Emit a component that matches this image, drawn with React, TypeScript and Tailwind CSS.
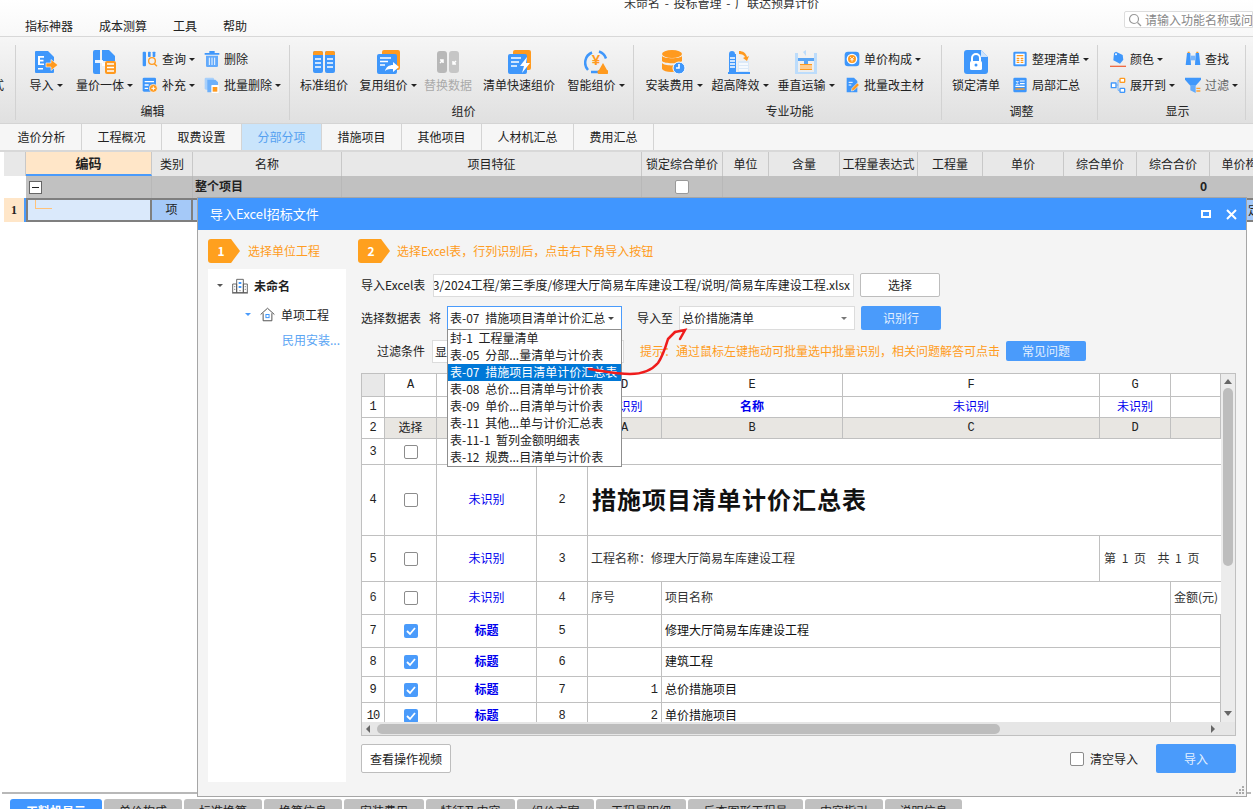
import type { ReactNode } from "react";

const B = "#3f97fb";
const O = "#ff9a1f";

const Svg = ({ s = 24, children }: { s?: number; children: ReactNode }) => (
  <svg width={s} height={s} viewBox="0 0 24 24" className="shrink-0">{children}</svg>
);

const icons: Record<string, ReactNode> = {
  daoru: (<><path d="M1 2a1 1 0 0 1 1-1h12l6 6v15a1 1 0 0 1-1 1H2a1 1 0 0 1-1-1z" fill={B} /><path d="M4 6h6v1.800H6v2h3.500v1.700H6v2h4V15H4z" fill="#fff" /><path d="M4 18h5v1.500H4z" fill="#fff" /><path d="M12 13h5V9.500l7 5.500-7 5.500V17h-5z" fill={O} stroke="#fff" strokeWidth=".6" /></>),
  liangjia: (<><path d="M0 2a2 2 0 0 1 2-2h5v24H2a2 2 0 0 1-2-2z" fill={B} /><path d="M9 0h7l6 6v5H9z" fill={B} /><path d="M9 13h5v3H9zM2 10h8v3H2z" fill="#fff" opacity=".9" /><rect x="12" y="11" width="11" height="13" rx="2" fill={O} /><path d="M14 14h7M14 17.500h7M14 21h7" stroke="#fff" strokeWidth="1.500" /></>),
  biaozhun: (<><rect x="1" y="1" width="10" height="22" rx="2" fill={B} /><rect x="13" y="1" width="10" height="22" rx="2" fill={B} /><path d="M1 3a2 2 0 0 1 2-2h6a2 2 0 0 1 2 2v2H1zM13 3a2 2 0 0 1 2-2h6a2 2 0 0 1 2 2v2H13z" fill={O} /><path d="M3 9h6M3 13h6M3 17h6M15 9h6M15 13h6M15 17h6" stroke="#fff" strokeWidth="1.600" /></>),
  fuyong: (<><rect x="6" y="0" width="18" height="20" rx="2" fill={O} /><rect x="1" y="4" width="20" height="20" rx="2" fill={B} /><path d="M4 8h11M4 11.500h8M4 15h5" stroke="#fff" strokeWidth="1.500" /><path d="M9 21c1-4 4-6 8-6v-3l6 5-6 5v-3c-3 0-6 0-8 2z" fill="#fff" /></>),
  tihuan: (<><rect x="1" y="1" width="10" height="22" rx="3" fill="#b8b8b8" /><rect x="13" y="1" width="10" height="22" rx="3" fill="#c6c6c6" /><path d="M4 13l3-3M4 10h3v3M20 11l-3 3M20 14h-3v-3" stroke="#fff" strokeWidth="1.500" fill="none" /></>),
  kuaisu: (<><rect x="6" y="0" width="18" height="20" rx="2" fill={O} /><rect x="1" y="4" width="19" height="20" rx="2" fill={B} /><path d="M4 8h10M4 12h8M4 16h6" stroke="#fff" strokeWidth="1.500" /><path d="M20 7l-7 9h4l-2 7 8-10h-4z" fill="#fff" /></>),
  zhineng: (<><path d="M8 2.500A11 11 0 0 0 4 20" fill="none" stroke={B} strokeWidth="2.500" /><path d="M15 1.500a11 11 0 0 1 7 7" fill="none" stroke={B} strokeWidth="2.500" /><path d="M7 22h9" stroke={B} strokeWidth="2.500" /><text x="12" y="15" fontSize="15" fontWeight="700" fill={O} textAnchor="middle" fontFamily="Liberation Sans">¥</text><path d="M16 24a2 2 0 0 1-1-4l4-7 4 7a2 2 0 0 1-1 4z" fill={O} /></>),
  anzhuang: (<><ellipse cx="10" cy="4" rx="10" ry="4" fill={O} /><path d="M0 6c2 3 18 3 20 0v5c-2 3-18 3-20 0z" fill={O} /><path d="M0 13c2 3 14 3 16 1v7c-6 2-14 1-16-2z" fill={O} /><circle cx="17" cy="18" r="6" fill={B} stroke="#fff" /><path d="M17 14v4h-3" stroke="#fff" strokeWidth="1.600" fill="none" /></>),
  chaogao: (<><path d="M1 4a3 3 0 0 1 6 0h1v18H1z" fill={B} /><path d="M2 8h5M2 11h5M2 14h5M2 17h5" stroke="#fff" strokeWidth="1.500" /><rect x="10" y="11" width="11" height="11" fill="#dbe9f8" /><path d="M11 14h9M11 17h9M11 20h9" stroke="#fff" strokeWidth="1.500" /><path d="M0 22h22v2H0z" fill={B} /><path d="M11 1c4 0 7 2 8 6l2-1-2 5-4-3 2-1c-1-2-3-3-6-3z" fill={O} /></>),
  chuizhi: (<><path d="M1 3h3v21H1zM20 3h3v21h-3z" fill="#bcdcfb" /><path d="M4 8h16v3H4z" fill="#5aa5f4" /><path d="M6 14h12v6H6z" fill={O} /><path d="M6 16h12M6 18h12" stroke="#fff" /><path d="M10 11h4v3h-4z" fill="#5aa5f4" /><path d="M4 22h16v2H4zM9 2l3-2v6" fill="#bcdcfb" /></>),
  suoding: (<><path d="M0 3a3 3 0 0 1 3-3h14l7 7v14a3 3 0 0 1-3 3H3a3 3 0 0 1-3-3z" fill={B} /><path d="M17 0l7 7h-7z" fill="#cfe4fc" /><path d="M8 11V8a4 4 0 0 1 8 0v3" fill="none" stroke="#fff" strokeWidth="2" /><rect x="6" y="11" width="12" height="9" rx="1.500" fill="#fff" /><circle cx="12" cy="15" r="1.500" fill={B} /></>),
  chaxun: (<><rect x="1" y="1" width="5" height="22" rx="1.500" fill={B} /><rect x="9" y="1" width="4" height="8" rx="1" fill={B} /><rect x="16" y="1" width="4" height="8" rx="1" fill={B} /><circle cx="15" cy="15" r="5" fill="none" stroke={O} strokeWidth="2" /><path d="M18.500 19l4 4" stroke={O} strokeWidth="2" /></>),
  buchong: (<><rect x="1" y="1" width="20" height="21" rx="2" fill={B} /><path d="M4 7h14M4 12h6M4 17h5" stroke="#fff" strokeWidth="2" /><circle cx="17" cy="17" r="6" fill={O} stroke="#fff" /><path d="M14 17h6M17 14v6" stroke="#fff" strokeWidth="1.500" /></>),
  shanchu: (<><path d="M1 3h22v2.500H1zM8 0h8v3H8z" fill={B} /><path d="M3 7h18v15a2 2 0 0 1-2 2H5a2 2 0 0 1-2-2z" fill="#63aafb" /><path d="M8 10v11M12 10v11M16 10v11" stroke="#fff" strokeWidth="1.400" /></>),
  piliang: (<><rect x="1" y="1" width="14" height="18" rx="2" fill="#a8d0fb" /><path d="M5 4h12l4 4v15H5z" fill="#6cb0fb" /><rect x="11" y="12" width="11" height="12" rx="1" fill="#fff" /><rect x="13" y="15" width="7" height="7" fill={O} /></>),
  danjia: (<><rect x="1" y="1" width="22" height="22" rx="5" fill={B} /><circle cx="12" cy="12" r="7" fill={O} stroke="#fff" strokeWidth="2" /><path d="M9 9l3 3 3-3M12 12v4M9.500 13h5" stroke="#fff" strokeWidth="1.200" fill="none" /></>),
  gaizhu: (<><path d="M4 1h11l5 5v17H4z" fill={B} /><path d="M7 8h6M7 12h4" stroke="#fff" strokeWidth="1.500" /><path d="M11 21l1-4 8-8 3 3-8 8z" fill={O} stroke="#fff" strokeWidth=".8" /></>),
  zhengli: (<><rect x="2" y="1" width="20" height="22" rx="2" fill={B} /><rect x="5" y="4" width="14" height="16" fill="#fff" /><path d="M7 7h10M7 11h4M13 11h4M7 14h4M13 14h4M7 17h4M13 17h4" stroke={O} strokeWidth="1.800" /></>),
  jubu: (<><rect x="2" y="1" width="20" height="22" rx="2" fill={B} /><path d="M12 6h7M12 10h7M5 14h14" stroke="#fff" strokeWidth="1.800" /><path d="M5 18h14" stroke={O} strokeWidth="2" /><text x="8" y="12" fontSize="9" fill="#fff" textAnchor="middle" fontFamily="Liberation Sans">Σ</text></>),
  yanse: (<><path d="M6 3l3-2 10 5 1 7-5 6-10-5z" fill={B} /><circle cx="9" cy="5" r="1.500" fill="#fff" /><path d="M0 22h24v2H0z" fill="#f06a42" /></>),
  zhankai: (<><rect x="1" y="8" width="9" height="9" rx="1" fill={B} /><rect x="14" y="1" width="9" height="8" rx="2" fill={O} /><rect x="14" y="16" width="9" height="8" rx="2" fill={B} /><rect x="16" y="3" width="5" height="4" fill="#fff" /><rect x="16" y="18" width="5" height="4" fill="#fff" /><rect x="3" y="10" width="5" height="5" fill="#fff" /><path d="M10 12h2V5h2M12 12v8h2" stroke={B} fill="none" /></>),
  chazhao: (<><path d="M3 3h5l1 18H1zM16 3h5l2 18h-8z" fill={B} /><rect x="9" y="7" width="6" height="7" fill="#7ab6fb" /><path d="M4 1h3v2H4zM17 1h3v2h-3z" fill={O} /></>),
  guolv: (<><path d="M0 1h24v3l-8 9H8L0 4z" fill={B} /><path d="M8 13h8v11l-8-4z" fill="#62aafb" /><path d="M17 16h6v2h-6zM17 20h6v2h-6z" fill={O} opacity=".9" /></>),
  building: (<><path d="M7 2h10v20H7zM1 9h6v13H1zM17 9h6v13h-6z" fill="none" stroke="#555" strokeWidth="1.300" /><path d="M0 22.500h24" stroke="#555" strokeWidth="1.300" /><path d="M10 6h4v3h-4zM10 12h4v3h-4z" fill={B} /><path d="M3 13h2M3 17h2M19 13h2M19 17h2M11 19h2" stroke="#555" /></>),
  home: (<><path d="M1 12L12 2l11 10" fill="none" stroke="#555" strokeWidth="1.600" /><path d="M5 10v12h14V10" fill="none" stroke="#555" strokeWidth="1.600" /><rect x="9.500" y="12" width="5" height="5" fill="none" stroke={B} strokeWidth="1.600" /></>),
};

const Caret = ({ color = "border-t-[#222]" }: { color?: string }) => (
  <span className={`inline-block shrink-0 w-0 h-0 border-x-[3px] border-x-transparent border-t-[3px] ${color}`} />
);

function Big({ icon, label, w, caret, off }: { icon: string; label: string; w: string; caret?: boolean; off?: boolean }) {
  return (
    <div className={`${w} flex flex-col items-center shrink-0`}>
      <div className="mt-[5px] h-[24px]"><Svg>{icons[icon]}</Svg></div>
      <div className={`mt-[3px] h-[16px] flex items-center gap-[3px] leading-[16px] whitespace-nowrap ${off ? "text-[#aaa]" : ""}`}>
        {label}{caret && <Caret />}
      </div>
    </div>
  );
}

function Small({ icon, label, caret, muted }: { icon: string; label: string; caret?: boolean; muted?: boolean }) {
  return (
    <div className="h-[26px] flex items-center whitespace-nowrap">
      <Svg s={16}>{icons[icon]}</Svg>
      <span className={`ml-[4px] ${muted ? "text-[#666]" : ""}`}>{label}</span>
      {caret && <span className="ml-[3px] flex"><Caret /></span>}
    </div>
  );
}

function Group({ w, label, pl, children }: { w: string; label: string; pl: string; children: ReactNode }) {
  return (
    <div className={`${w} ${pl} h-[75px] shrink-0 border-r border-[#d2d2d2] flex flex-col`}>
      <div className="h-[58px] flex">{children}</div>
      <div className="h-[16px] leading-[16px] text-center">{label}</div>
    </div>
  );
}

const SmallCol = ({ w, children }: { w: string; children: ReactNode }) => (
  <div className={`${w} pt-[1px] shrink-0`}>{children}</div>
);

const topTabs = [
  { t: "造价分析", w: "w-[80px]" }, { t: "工程概况", w: "w-[80px]" }, { t: "取费设置", w: "w-[80px]" },
  { t: "分部分项", w: "w-[80px]", on: true }, { t: "措施项目", w: "w-[80px]" }, { t: "其他项目", w: "w-[80px]" },
  { t: "人材机汇总", w: "w-[92px]" }, { t: "费用汇总", w: "w-[80px]" },
];

const headCols = [
  { t: "编码", w: "w-[126px]", on: true }, { t: "类别", w: "w-[41px]" }, { t: "名称", w: "w-[149px]" },
  { t: "项目特征", w: "w-[300px]" }, { t: "锁定综合单价", w: "w-[81px]" }, { t: "单位", w: "w-[46px]" },
  { t: "含量", w: "w-[71px]" }, { t: "工程量表达式", w: "w-[78px]" }, { t: "工程量", w: "w-[65px]" },
  { t: "单价", w: "w-[81px]" }, { t: "综合单价", w: "w-[73px]" }, { t: "综合合价", w: "w-[73px]" }, { t: "单价构", w: "w-[60px]" },
];

const bottomTabs = [
  { t: "工料机显示", w: "w-[92px]" }, { t: "单价构成", w: "w-[78px]" }, { t: "标准换算", w: "w-[78px]" },
  { t: "换算信息", w: "w-[78px]" }, { t: "安装费用", w: "w-[80px]" }, { t: "特征及内容", w: "w-[89px]" },
  { t: "组价方案", w: "w-[77px]" }, { t: "工程量明细", w: "w-[90px]" }, { t: "反查图形工程量", w: "w-[115px]" },
  { t: "内容指引", w: "w-[78px]" }, { t: "说明信息", w: "w-[77px]" },
];

const sheets = [
  "封-1 工程量清单", "表-05 分部...量清单与计价表", "表-07 措施项目清单计价汇总表", "表-08 总价...目清单与计价表",
  "表-09 单价...目清单与计价表", "表-11 其他...单与计价汇总表", "表-11-1 暂列金额明细表", "表-12 规费...目清单与计价表",
];

const mono = "font-['Liberation_Mono',monospace]";

function Cell({ w, className = "", children }: { w: string; className?: string; children?: ReactNode }) {
  return (
    <div className={`${w} shrink-0 h-full border-r border-[#c0c0c0] flex items-center justify-center overflow-hidden whitespace-nowrap ${className}`}>
      {children}
    </div>
  );
}

const Check = ({ on }: { on?: boolean }) => on ? (
  <span className="w-[14px] h-[14px] rounded-[2px] bg-[#4a9bfb] flex items-center justify-center">
    <svg width="10" height="10" viewBox="0 0 10 10"><path d="M1 5l3 3 5-6" fill="none" stroke="#fff" strokeWidth="1.800" /></svg>
  </span>
) : (
  <span className="w-[14px] h-[14px] rounded-[2px] bg-white border border-[#8c8c8c]" />
);

const Unknown = () => <span className="-mt-[2px] text-[#0000ee]">未识别</span>;
const Num = `${mono} text-[12px]`;

const C0 = "w-[23px]", CA = "w-[52px]", CB = "w-[100px]", CC = "w-[51px]", CD = "w-[74px]", CE = "w-[181px]", CF = "w-[257px]", CG = "w-[71px]", CH = "w-[50px]";

function DataRow({ h, n, c, left, right }: { h: string; n: number; c: number; left?: string; right: string }) {
  return (
    <div className={`${h} shrink-0 flex border-b border-[#c0c0c0]`}>
      <Cell w={C0} className={`${Num} ${n === 10 ? "tracking-[-1px]" : ""}`}>{n}</Cell>
      <Cell w={CA}><Check on /></Cell>
      <Cell w={CB} className="font-bold text-[#0000ee]"><span className="-mt-[2px]">标题</span></Cell>
      <Cell w={CC} className={Num}>{c}</Cell>
      <Cell w={CD} className={`${mono} justify-end pr-[3px]`}>{left}</Cell>
      <div className="w-[509px] shrink-0 h-full border-r border-[#c0c0c0] flex items-center pl-[3px] pb-[2px] text-[#111]">{right}</div>
      <Cell w={CH} />
    </div>
  );
}

export default function App() {
  return (
    <div className="relative w-[1253px] h-[809px] overflow-hidden bg-white text-[12px] text-[#222] font-['Noto_Sans_CJK_SC','Noto_Sans',sans-serif]">
      {/* 标题和菜单 */}
      <div className="h-[37px] border-b border-[#d8d8d8] bg-gradient-to-b from-white to-[#f8f8f8] overflow-hidden">
        <div className="h-[6px] -mt-[4px] pl-[624px] leading-[14px] whitespace-nowrap text-[#333] [word-spacing:2px]">未命名 - 投标管理 - 广联达预算计价</div>
        <div className="mt-[9px] flex items-start pl-[25px]">
          <div className="flex gap-[26px] pt-[7px] leading-[16px]">
            <span>指标神器</span><span>成本测算</span><span>工具</span><span>帮助</span>
          </div>
          <div className="ml-auto w-[129px] h-[17px] bg-white border border-[#ddd] rounded-l-[2px] flex items-center overflow-hidden">
            <svg width="14" height="14" viewBox="0 0 14 14" className="ml-[3px] shrink-0"><circle cx="6" cy="6" r="4.500" fill="none" stroke="#999" strokeWidth="1.200" /><path d="M9.500 9.500L13 13" stroke="#999" strokeWidth="1.200" /></svg>
            <span className="ml-[3px] text-[#888] whitespace-nowrap">请输入功能名称或问</span>
          </div>
        </div>
      </div>

      {/* 功能区 */}
      <div className="h-[87px] pt-[8px] border-b border-[#d4d4d4] bg-gradient-to-b from-[#f6f6f6] to-[#e0e0e0] flex overflow-hidden">
        <div className="w-[16px] h-[75px] shrink-0 border-r border-[#d2d2d2] relative overflow-hidden">
          <span className="absolute -left-[8px] top-[32px] leading-[16px]">式</span>
        </div>
        <Group w="w-[274px]" pl="pl-0" label="编辑">
          <Big icon="daoru" label="导入" caret w="w-[60px]" />
          <Big icon="liangjia" label="量价一体" caret w="w-[57px]" />
          <div className="w-[9px] shrink-0" />
          <SmallCol w="w-[62px]"><Small icon="chaxun" label="查询" caret /><Small icon="buchong" label="补充" caret /></SmallCol>
          <SmallCol w="w-[76px]"><Small icon="shanchu" label="删除" /><Small icon="piliang" label="批量删除" caret /></SmallCol>
        </Group>
        <Group w="w-[344px]" pl="pl-[4px]" label="组价">
          <Big icon="biaozhun" label="标准组价" w="w-[60px]" />
          <Big icon="fuyong" label="复用组价" caret w="w-[68px]" />
          <Big icon="tihuan" label="替换数据" off w="w-[52px]" />
          <Big icon="kuaisu" label="清单快速组价" w="w-[90px]" />
          <Big icon="zhineng" label="智能组价" caret w="w-[64px]" />
        </Group>
        <Group w="w-[308px]" pl="pl-[4px]" label="专业功能">
          <Big icon="anzhuang" label="安装费用" caret w="w-[72px]" />
          <Big icon="chaogao" label="超高降效" caret w="w-[60px]" />
          <Big icon="chuizhi" label="垂直运输" caret w="w-[72px]" />
          <div className="w-[2px] shrink-0" />
          <SmallCol w="w-[90px]"><Small icon="danjia" label="单价构成" caret /><Small icon="gaizhu" label="批量改主材" /></SmallCol>
        </Group>
        <Group w="w-[156px]" pl="pl-[4px]" label="调整">
          <Big icon="suoding" label="锁定清单" w="w-[60px]" />
          <div className="w-[6px] shrink-0" />
          <SmallCol w="w-[80px]"><Small icon="zhengli" label="整理清单" caret /><Small icon="jubu" label="局部汇总" /></SmallCol>
        </Group>
        <Group w="w-[148px]" pl="pl-[12px]" label="显示">
          <SmallCol w="w-[75px]"><Small icon="yanse" label="颜色" caret /><Small icon="zhankai" label="展开到" caret /></SmallCol>
          <SmallCol w="w-[60px]"><Small icon="chazhao" label="查找" /><Small icon="guolv" label="过滤" caret muted /></SmallCol>
        </Group>
      </div>

      {/* 页签 */}
      <div className="h-[28px] pl-[2px] bg-[#f6f6f6] border-b-2 border-[#d8d8d8] flex">
        {topTabs.map((t) => (
          <div key={t.t} className={`${t.w} h-full border-r border-[#d4d4d4] flex items-center justify-center ${t.on ? "bg-[#c9e4fb] text-[#55a0f0]" : ""}`}>{t.t}</div>
        ))}
      </div>

      {/* 清单表格 */}
      <div className="flex h-[24px] pl-[4px] bg-white">
        <div className="w-[22px] shrink-0 bg-[#e8e8e8] border-r border-[#c8c8c8]" />
        {headCols.map((c) => (
          <div key={c.t} className={`${c.w} shrink-0 border-r border-[#c8c8c8] flex items-center justify-center overflow-hidden whitespace-nowrap ${c.on ? "bg-[#ffe6c8] border-b-2 border-b-[#4a9bfb] font-bold text-[13px]" : "bg-[#e8e8e8]"}`}>{c.t}</div>
        ))}
      </div>
      <div className="flex h-[22px] pl-[4px]">
        <div className="w-[22px] shrink-0 bg-white" />
        <div className="flex-1 bg-[#c1c1c1] flex font-bold">
          <div className="w-[126px] shrink-0 border-r border-[#b8b8b8] flex items-center pl-[3px]">
            <span className="w-[13px] h-[13px] bg-white border border-[#666] flex items-center justify-center"><span className="w-[7px] h-[1px] bg-[#222]" /></span>
          </div>
          <div className="w-[41px] shrink-0 border-r border-[#b8b8b8]" />
          <div className="w-[149px] shrink-0 border-r border-[#b8b8b8] flex items-center pl-[2px] pb-[2px]">整个项目</div>
          <div className="w-[300px] shrink-0 border-r border-[#b8b8b8]" />
          <div className="w-[81px] shrink-0 border-r border-[#b8b8b8] flex items-center justify-center"><span className="w-[14px] h-[14px] bg-white border border-[#999] rounded-[2px]" /></div>
          <div className="ml-[414px] w-[73px] shrink-0 text-right pr-[3px] leading-[20px]">0</div>
        </div>
      </div>
      <div className="flex h-[24px] pl-[4px]">
        <div className="w-[22px] shrink-0 bg-[#ffe6c8] border-r-2 border-[#4a9bfb] flex items-center justify-center font-bold font-['Liberation_Serif',serif]">1</div>
        <div className="w-[126px] shrink-0 bg-[#dae9fb] border-2 border-[#7f7f7f] relative">
          <span className="absolute left-[7px] top-0 w-[17px] h-[9px] border-l border-b border-[#ffc27a]" />
        </div>
        <div className="w-[41px] shrink-0 bg-[#a5c9f8] border-y-2 border-r-2 border-[#7f7f7f] flex items-center justify-center pb-[2px]">项</div>
        <div className="flex-1 bg-[#a5c9f8] border-y-2 border-[#7f7f7f] flex items-center justify-end overflow-hidden">
          <span className="-mr-[7px]">定</span>
        </div>
      </div>
      <div className="h-[570px] bg-white" />

      {/* 底部页签 */}
      <div className="h-[2px] mx-[2px] bg-[#b8b8b8]" />
      <div className="pl-[10px] pt-[5px] flex gap-[2px]">
        {bottomTabs.map((t, i) => (
          <div key={t.t} className={`${t.w} h-[26px] shrink-0 rounded-t-[3px] pt-[3px] text-center whitespace-nowrap ${i === 0 ? "bg-[#4096ff] text-white font-bold" : "bg-[#c0c0c0]"}`}>{t.t}</div>
        ))}
      </div>

      {/* 导入弹窗 */}
      <div className="absolute left-[197px] top-[197px] w-[1050px] h-[600px] bg-[#f4f4f4] border border-[#a6a6a6] flex flex-col">
        <div className="h-[32px] bg-[#4096ff] shrink-0 flex items-center pl-[12px] pr-[9px] text-white text-[13px]">
          导入Excel招标文件
          <span className="ml-auto w-[10px] h-[8px] border-2 border-white" />
          <svg width="11" height="11" viewBox="0 0 11 11" className="ml-[15px]"><path d="M1 1l9 9M10 1l-9 9" stroke="#fff" strokeWidth="2" /></svg>
        </div>
        <div className="flex-1 flex pl-[10px] pt-[9px]">
          {/* 左侧工程树 */}
          <div className="w-[138px] shrink-0">
            <div className="h-[24px] flex items-center whitespace-nowrap text-[#ff9c22]">
              <span className="w-[32px] h-[24px] bg-[#ffa01e] rounded-l-[3px] [clip-path:polygon(0_0,72%_0,100%_50%,72%_100%,0_100%)] pr-[6px] flex items-center justify-center text-white font-bold">1</span>
              <span className="ml-[8px]">选择单位工程</span>
            </div>
            <div className="mt-[6px] h-[513px] bg-white">
              <div className="h-[32px] pt-[1px] flex items-center pl-[9px]">
                <Caret color="border-t-[#555]" />
                <span className="ml-[9px]"><Svg s={16}>{icons.building}</Svg></span>
                <span className="ml-[6px] font-bold">未命名</span>
              </div>
              <div className="h-[27px] flex items-center pl-[37px]">
                <Caret color="border-t-[#4a9bfb]" />
                <span className="ml-[9px]"><Svg s={15}>{icons.home}</Svg></span>
                <span className="ml-[6px]">单项工程</span>
              </div>
              <div className="h-[24px] flex items-center pl-[74px] text-[#5aa5f4] whitespace-nowrap">民用安装...</div>
            </div>
          </div>

          {/* 右侧 */}
          <div className="ml-[12px] w-[878px] shrink-0">
            <div className="h-[24px] flex items-center whitespace-nowrap text-[#ff9c22]">
              <span className="w-[32px] h-[24px] bg-[#ffa01e] rounded-l-[3px] [clip-path:polygon(0_0,72%_0,100%_50%,72%_100%,0_100%)] pr-[6px] flex items-center justify-center text-white font-bold">2</span>
              <span className="ml-[7px]">选择Excel表，行列识别后，点击右下角导入按钮</span>
            </div>

            <div className="pl-[3px]">
              <div className="mt-[10px] h-[24px] flex items-center">
                <span className="w-[72px] shrink-0 whitespace-nowrap">导入Excel表</span>
                <div className="w-[421px] h-[23px] shrink-0 bg-white border border-[#dcdcdc] flex items-center justify-end overflow-hidden whitespace-nowrap pr-[3px]">
                  2023/2024工程/第三季度/修理大厅简易车库建设工程/说明/简易车库建设工程.xlsx
                </div>
                <div className="ml-[6px] w-[80px] h-[24px] bg-white border border-[#bdbdbd] rounded-[2px] flex items-center justify-center">选择</div>
              </div>

              <div className="mt-[9px] h-[24px] flex items-center">
                <span className="w-[68px] shrink-0 whitespace-nowrap">选择数据表</span>
                <span className="w-[18px] shrink-0">将</span>
                <div className="w-[175px] h-[24px] shrink-0 bg-white border border-[#4a9bfb] flex items-center pl-[2px] pr-[7px] whitespace-nowrap overflow-hidden [word-spacing:3px]">
                  <span className="overflow-hidden">表-07 措施项目清单计价汇总</span>
                  <span className="ml-auto flex"><Caret color="border-t-[#444]" /></span>
                </div>
                <span className="ml-[15px] w-[42px] shrink-0">导入至</span>
                <div className="w-[176px] h-[24px] shrink-0 bg-white border border-[#dcdcdc] flex items-center pl-[2px] pr-[7px]">
                  总价措施清单
                  <span className="ml-auto flex"><Caret color="border-t-[#777]" /></span>
                </div>
                <div className="ml-[6px] w-[80px] h-[24px] bg-[#4a9bfb] rounded-[2px] text-[#e3f0ff] flex items-center justify-center">识别行</div>
              </div>

              <div className="mt-[9px] h-[24px] flex items-center">
                <span className="ml-[16px] w-[55px] shrink-0 whitespace-nowrap">过滤条件</span>
                <div className="w-[192px] h-[23px] shrink-0 bg-white border border-[#dcdcdc] pl-[2px] leading-[21px]">显</div>
                <span className="ml-[16px] w-[366px] shrink-0 whitespace-nowrap text-[#ff9c22]">提示：通过鼠标左键拖动可批量选中批量识别，相关问题解答可点击</span>
                <div className="w-[80px] h-[20px] bg-[#4a9bfb] rounded-[2px] text-[#e3f0ff] flex items-center justify-center">常见问题</div>
              </div>

              {/* 预览表 */}
              <div className="mt-[10px] w-[875px] h-[363px] bg-white border border-[#c0c0c0] flex flex-col">
                <div className="h-[348px] flex overflow-hidden">
                  <div className="w-[859px] shrink-0 flex flex-col overflow-hidden">
                    <div className={`h-[23px] shrink-0 flex border-b border-[#c0c0c0] ${Num}`}>
                      <Cell w={C0} className="bg-[#e8e8e8]" /><Cell w={CA}>A</Cell><Cell w={CB} /><Cell w={CC} />
                      <Cell w={CD}>D</Cell><Cell w={CE}>E</Cell><Cell w={CF}>F</Cell><Cell w={CG}>G</Cell><Cell w={CH} />
                    </div>
                    <div className="h-[21px] shrink-0 flex border-b border-[#c0c0c0]">
                      <Cell w={C0} className={Num}>1</Cell><Cell w={CA} /><Cell w={CB} /><Cell w={CC} />
                      <Cell w={CD}><Unknown /></Cell><Cell w={CE} className="font-bold text-[#0000ee]"><span className="-mt-[2px]">名称</span></Cell>
                      <Cell w={CF}><Unknown /></Cell><Cell w={CG}><Unknown /></Cell><Cell w={CH} />
                    </div>
                    <div className={`h-[21px] shrink-0 flex border-b border-[#c0c0c0] bg-[#e8e6e2] ${Num}`}>
                      <Cell w={C0} className="bg-white">2</Cell>
                      <Cell w={CA} className="font-['Noto_Sans_CJK_SC',sans-serif] pb-[2px]">选择</Cell>
                      <Cell w={CB} /><Cell w={CC} /><Cell w={CD}>A</Cell><Cell w={CE}>B</Cell><Cell w={CF}>C</Cell><Cell w={CG}>D</Cell><Cell w={CH} />
                    </div>
                    <div className="h-[26px] shrink-0 flex border-b border-[#c0c0c0]">
                      <Cell w={C0} className={Num}>3</Cell><Cell w={CA}><Check /></Cell><Cell w={CB} />
                      <Cell w={CC} /><div className="flex-1" />
                    </div>
                    <div className="h-[71px] shrink-0 flex border-b border-[#c0c0c0]">
                      <Cell w={C0} className={Num}>4</Cell><Cell w={CA}><Check /></Cell><Cell w={CB}><Unknown /></Cell>
                      <Cell w={CC} className={Num}>2</Cell>
                      <div className="flex-1 flex items-center pl-[4px] pb-[2px] text-[24px] font-bold tracking-[1px] text-[#111] whitespace-nowrap">措施项目清单计价汇总表</div>
                    </div>
                    <div className="h-[46px] shrink-0 flex border-b border-[#c0c0c0]">
                      <Cell w={C0} className={Num}>5</Cell><Cell w={CA}><Check /></Cell><Cell w={CB}><Unknown /></Cell>
                      <Cell w={CC} className={Num}>3</Cell>
                      <div className="w-[512px] shrink-0 h-full border-r border-[#c0c0c0] flex items-center pl-[3px] pb-[2px] text-[#333] whitespace-nowrap">工程名称：修理大厅简易车库建设工程</div>
                      <div className="flex-1 flex items-center pl-[4px] pb-[2px] text-[#333] whitespace-pre [word-spacing:3px]">第 1 页  共 1 页</div>
                    </div>
                    <div className="h-[33px] shrink-0 flex border-b border-[#c0c0c0] text-[#333]">
                      <Cell w={C0} className={Num}>6</Cell><Cell w={CA}><Check /></Cell><Cell w={CB}><Unknown /></Cell>
                      <Cell w={CC} className={Num}>4</Cell>
                      <Cell w={CD} className="justify-start pl-[3px] pb-[2px]">序号</Cell>
                      <div className="w-[509px] shrink-0 h-full border-r border-[#c0c0c0] flex items-center pl-[3px] pb-[2px]">项目名称</div>
                      <div className="flex-1 flex items-center pl-[3px] pb-[2px] whitespace-nowrap overflow-hidden">金额(元)</div>
                    </div>
                    <DataRow h="h-[33px]" n={7} c={5} right="修理大厅简易车库建设工程" />
                    <DataRow h="h-[29px]" n={8} c={6} right="建筑工程" />
                    <DataRow h="h-[26px]" n={9} c={7} left="1" right="总价措施项目" />
                    <DataRow h="h-[26px]" n={10} c={8} left="2" right="单价措施项目" />
                  </div>
                  {/* 竖向滚动条 */}
                  <div className="w-[14px] shrink-0 bg-[#ececec] flex flex-col items-center">
                    <span className="mt-[5px] w-0 h-0 border-x-[4px] border-x-transparent border-b-[5px] border-b-[#666]" />
                    <span className="mt-[4px] w-[10px] h-[178px] rounded-[5px] bg-[#bdbdbd]" />
                    <span className="mt-auto mb-[6px] w-0 h-0 border-x-[4px] border-x-transparent border-t-[5px] border-t-[#666]" />
                  </div>
                </div>
                {/* 横向滚动条 */}
                <div className="h-[13px] bg-[#e6e6e6] flex items-center pl-[4px]">
                  <span className="w-0 h-0 border-y-[4px] border-y-transparent border-r-[4px] border-r-[#666]" />
                  <span className="ml-[7px] w-[623px] h-[10px] rounded-[5px] bg-[#bdbdbd]" />
                  <span className="ml-[211px] w-0 h-0 border-y-[4px] border-y-transparent border-l-[4px] border-l-[#666]" />
                </div>
              </div>

              {/* 底部按钮 */}
              <div className="mt-[8px] w-[875px] h-[29px] flex items-center">
                <div className="w-[90px] h-[29px] bg-white border border-[#bdbdbd] rounded-[2px] flex items-center justify-center">查看操作视频</div>
                <span className="ml-auto w-[14px] h-[14px] bg-white border border-[#8c8c8c] rounded-[2px]" />
                <span className="ml-[6px]">清空导入</span>
                <div className="ml-[18px] w-[80px] h-[29px] bg-[#4a9bfb] rounded-[2px] text-[#e3f0ff] flex items-center justify-center">导入</div>
              </div>
            </div>
          </div>
        </div>
        {/* 拖拽角 */}
        <svg width="10" height="10" viewBox="0 0 10 10" className="absolute right-[1px] bottom-[1px]"><path d="M7 1h2v2H7zM7 4h2v2H7zM4 4h2v2H4zM7 7h2v2H7zM4 7h2v2H4zM1 7h2v2H1z" fill="#aaa" /></svg>
      </div>

      {/* 数据表下拉 */}
      <div className="absolute left-[447px] top-[329px] w-[175px] h-[138px] bg-white border border-[#8f8f8f] flex flex-col [word-spacing:3px]">
        {sheets.map((s, i) => (
          <div key={s} className={`h-[17px] shrink-0 pl-[2px] leading-[16px] whitespace-nowrap overflow-hidden ${i === 2 ? "bg-[#0078d7] text-white" : ""}`}>{s}</div>
        ))}
      </div>

      {/* 红色标注箭头 */}
      <svg width="110" height="60" viewBox="0 0 110 60" className="absolute left-[585px] top-[325px] pointer-events-none">
        <path d="M4 44c14 2 28 5 41 5c12 0 22-4 28-11c5-7 7-14 10-24l7-7" fill="none" stroke="#ef1c1c" strokeWidth="2.500" strokeLinecap="round" />
        <path d="M90 7l10-2l-5 9" fill="none" stroke="#ef1c1c" strokeWidth="2.500" strokeLinecap="round" />
      </svg>
    </div>
  );
}
